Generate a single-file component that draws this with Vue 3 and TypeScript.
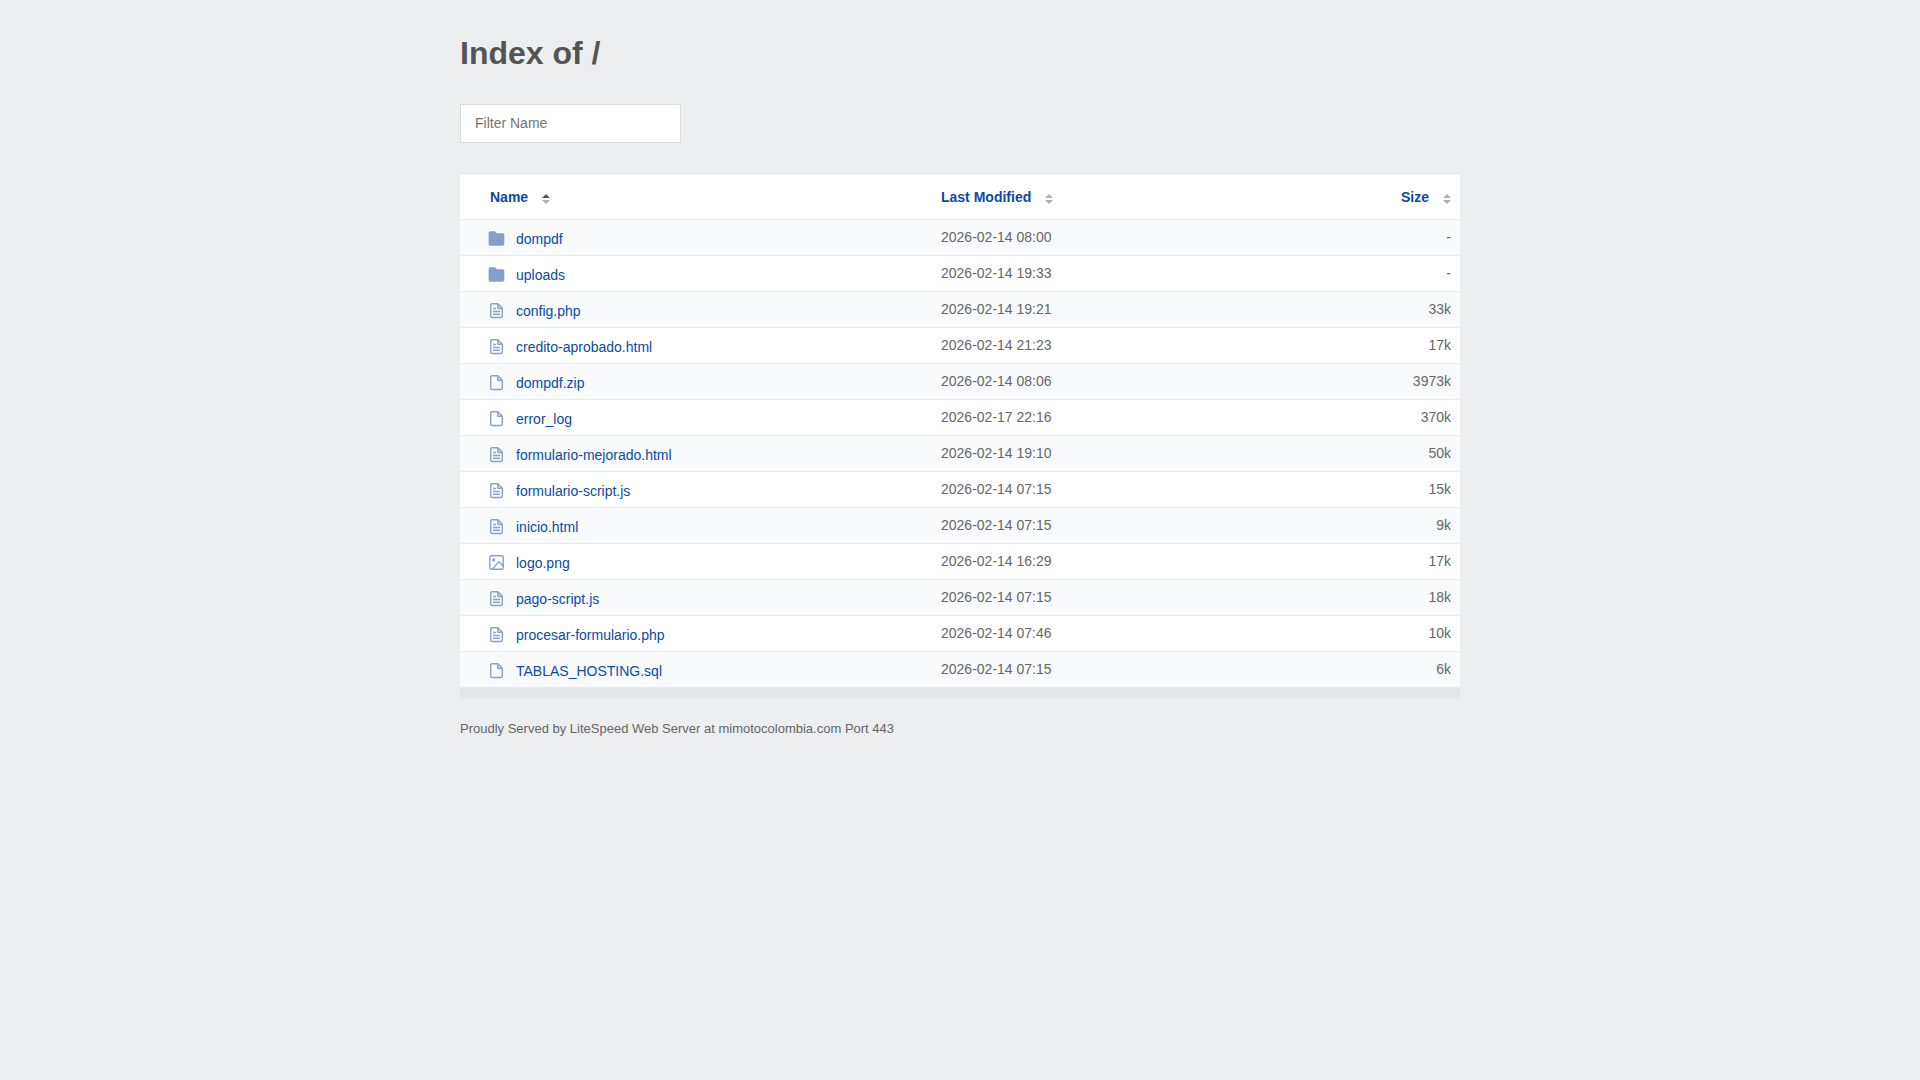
<script setup lang="ts">
import { computed, ref } from 'vue'

type Kind = 'folder' | 'text' | 'file' | 'image'
type SortKey = 'name' | 'modified' | 'size'

interface Entry {
  name: string
  kind: Kind
  modified: string
  size: number | null
}

const entries: Entry[] = [
  { name: 'dompdf', kind: 'folder', modified: '2026-02-14 08:00', size: null },
  { name: 'uploads', kind: 'folder', modified: '2026-02-14 19:33', size: null },
  { name: 'config.php', kind: 'text', modified: '2026-02-14 19:21', size: 33 },
  { name: 'credito-aprobado.html', kind: 'text', modified: '2026-02-14 21:23', size: 17 },
  { name: 'dompdf.zip', kind: 'file', modified: '2026-02-14 08:06', size: 3973 },
  { name: 'error_log', kind: 'file', modified: '2026-02-17 22:16', size: 370 },
  { name: 'formulario-mejorado.html', kind: 'text', modified: '2026-02-14 19:10', size: 50 },
  { name: 'formulario-script.js', kind: 'text', modified: '2026-02-14 07:15', size: 15 },
  { name: 'inicio.html', kind: 'text', modified: '2026-02-14 07:15', size: 9 },
  { name: 'logo.png', kind: 'image', modified: '2026-02-14 16:29', size: 17 },
  { name: 'pago-script.js', kind: 'text', modified: '2026-02-14 07:15', size: 18 },
  { name: 'procesar-formulario.php', kind: 'text', modified: '2026-02-14 07:46', size: 10 },
  { name: 'TABLAS_HOSTING.sql', kind: 'file', modified: '2026-02-14 07:15', size: 6 },
]

const columns: { key: SortKey; label: string }[] = [
  { key: 'name', label: 'Name' },
  { key: 'modified', label: 'Last Modified' },
  { key: 'size', label: 'Size' },
]

const filter = ref('')
const sortKey = ref<SortKey>('name')
const ascending = ref(true)

function sortBy(key: SortKey) {
  ascending.value = sortKey.value === key ? !ascending.value : true
  sortKey.value = key
}

function compare(a: Entry, b: Entry): number {
  if (sortKey.value === 'size') return (a.size ?? -1) - (b.size ?? -1)
  if (sortKey.value === 'modified') return a.modified.localeCompare(b.modified)
  return a.name.toLowerCase().localeCompare(b.name.toLowerCase())
}

// Folders always stay above files, whatever the sort order.
const rows = computed(() =>
  entries
    .filter((e) => e.name.toLowerCase().includes(filter.value.toLowerCase()))
    .sort((a, b) => {
      const folders = Number(b.kind === 'folder') - Number(a.kind === 'folder')
      return folders || (ascending.value ? compare(a, b) : compare(b, a))
    }),
)

function ariaSort(key: SortKey) {
  if (sortKey.value !== key) return 'none'
  return ascending.value ? 'ascending' : 'descending'
}
</script>

<template>
  <main class="content">
    <h1>Index of /</h1>
    <input v-model="filter" class="filter" type="text" placeholder="Filter Name" aria-label="Filter Name" />

    <table class="listing">
      <thead>
        <tr>
          <th v-for="col in columns" :key="col.key" :class="col.key" :aria-sort="ariaSort(col.key)">
            <button type="button" class="sort" @click="sortBy(col.key)">
              {{ col.label }}
              <svg class="arrows" viewBox="0 0 8 10" aria-hidden="true">
                <path d="M0 4 4 0l4 4z" :class="{ active: sortKey === col.key && ascending }" />
                <path d="M0 6l4 4 4-4z" :class="{ active: sortKey === col.key && !ascending }" />
              </svg>
            </button>
          </th>
        </tr>
      </thead>
      <tbody>
        <tr v-for="row in rows" :key="row.name">
          <td class="name">
            <a :href="'#' + row.name">
              <svg class="icon" viewBox="0 0 16 16" aria-hidden="true">
                <path
                  v-if="row.kind === 'folder'"
                  class="solid"
                  d="M2.300.3h4.300c.6 0 1 .3 1.300.8L8.500 2.300h6.100c1 0 1.700.7 1.700 1.700v9c0 1-.7 1.700-1.700 1.700H2.300c-1 0-1.700-.7-1.700-1.700V2C.6 1 1.300.3 2.300.3z"
                />
                <template v-else-if="row.kind === 'image'">
                  <rect x="1.800" y=".8" width="13.400" height="13.400" rx="1.500" />
                  <circle cx="5.700" cy="4.900" r="1.600" class="dot" />
                  <path d="M4.200 14.200l6.700-7.600 4.300 4.300" />
                </template>
                <template v-else>
                  <path d="M9.800.7H4C3.200.7 2.700 1.200 2.700 2v11.200c0 .8.5 1.300 1.300 1.300h9c.8 0 1.300-.5 1.300-1.300V5.200z" />
                  <path d="M9.800.7v4.500h4.500" />
                  <path v-if="row.kind === 'text'" d="M5 5.500h3M5 8.500h7M5 11.300h7" />
                </template>
              </svg>
              <span>{{ row.name }}</span>
            </a>
          </td>
          <td class="modified">{{ row.modified }}</td>
          <td class="size">{{ row.size === null ? '-' : row.size + 'k' }}</td>
        </tr>
      </tbody>
    </table>

    <footer>Proudly Served by LiteSpeed Web Server at mimotocolombia.com Port 443</footer>
  </main>
</template>

<style>
body {
  background: #edeef0;
}
</style>

<style scoped>
.content {
  box-sizing: border-box;
  max-width: 1000px;
  margin: 0 auto;
  padding-top: 32px;
  color: #666;
  font-family: Arial, "Liberation Sans", sans-serif;
  font-size: 14px;
  line-height: 20px;
}

h1 {
  margin: 0 0 30px;
  color: #545454;
  font-size: 32px;
  line-height: 42px;
}

.filter {
  display: block;
  box-sizing: border-box;
  width: 221px;
  height: 39px;
  margin-bottom: 32px;
  padding: 0 14px 2px;
  border: 1px solid #d9dbde;
  border-radius: 0;
  background: #fff;
  color: #666;
  font: inherit;
}

.filter::placeholder {
  color: #757575;
}

.listing {
  width: 100%;
  border-collapse: separate;
  border-spacing: 0;
  border-bottom: 10px solid #e4e7ea;
  background: #fff;
  table-layout: fixed;
}

th,
td {
  box-sizing: border-box;
  height: 36px;
  padding: 0 9px 1px;
  border-bottom: 1px solid #e9ebee;
  text-align: left;
}

th {
  height: 45px;
  padding-bottom: 0;
}

th.name {
  width: 47%;
  padding-left: 30px;
}

td.name {
  padding: 2px 9px 0 28px;
}

.modified {
  padding-left: 11px;
}

.size {
  text-align: right;
}

tbody tr:nth-child(odd) {
  background: #f9fafc;
}

.sort {
  display: inline-flex;
  align-items: center;
  gap: 14px;
  padding: 0;
  border: 0;
  background: none;
  color: #0a4aa8;
  font: inherit;
  font-weight: bold;
  cursor: pointer;
}

.arrows {
  width: 8px;
  height: 10px;
  margin-top: 3px;
  fill: #b0b0b0;
}

.arrows .active {
  fill: #545454;
}

a {
  display: flex;
  align-items: center;
  gap: 12px;
  width: fit-content;
  color: #0a4aa8;
  text-decoration: none;
}

.icon {
  width: 16px;
  height: 16px;
  overflow: visible;
  fill: none;
  stroke: #86a2cc;
  stroke-width: 1.4;
  stroke-linejoin: round;
}

.icon .solid {
  fill: #859fc5;
  stroke: none;
}

.icon .dot {
  fill: #86a2cc;
  stroke: none;
}

footer {
  padding: 21px 0;
  font-size: 13px;
}
</style>
